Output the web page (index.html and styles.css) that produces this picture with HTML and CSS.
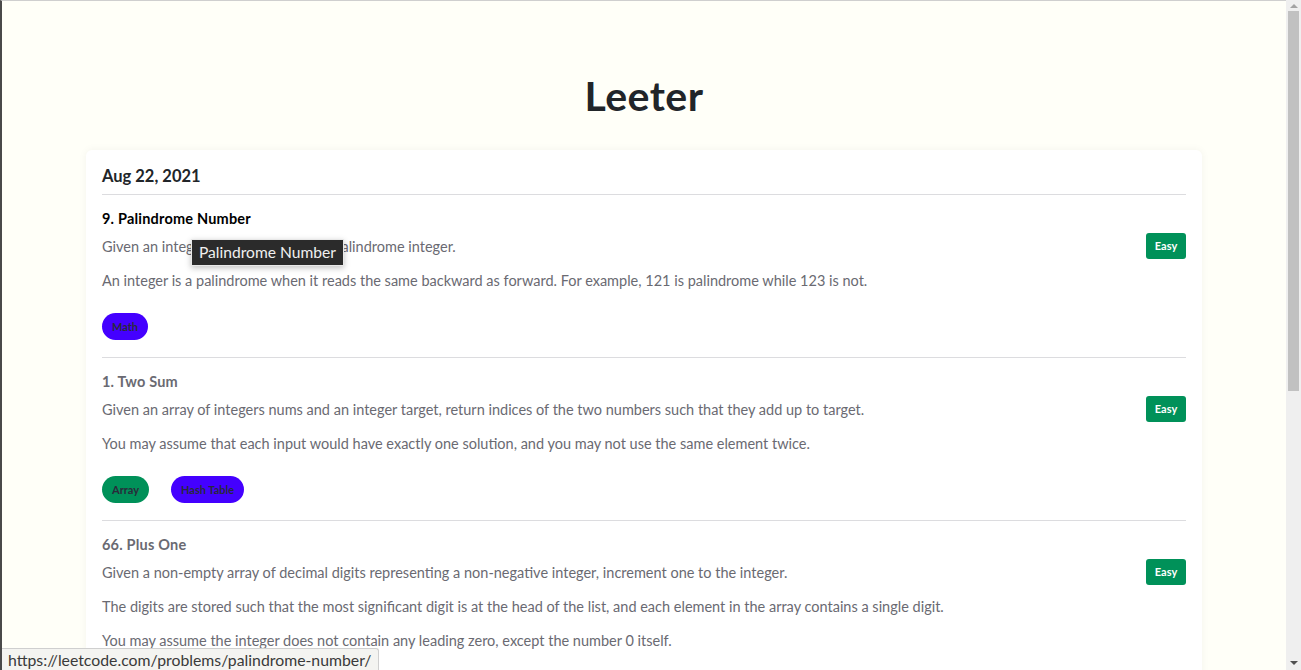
FILE: index.html
```html
<!DOCTYPE html>
<html lang="en">
<head>
<meta charset="utf-8">
<title>Leeter</title>
<link rel="stylesheet" href="styles.css">
</head>
<body>
<div class="window">
  <main class="page">
    <h1 class="brand">Leeter</h1>
    <div class="container">
      <section class="card">
        <h2 class="date">Aug 22, 2021</h2>
        <article class="item">
          <a class="item-title active" href="#">9. Palindrome Number</a>
          <div class="item-body">
            <div class="desc">
              <p>Given an integer x, return true if x is palindrome integer.</p>
              <p>An integer is a palindrome when it reads the same backward as forward. For example, 121 is palindrome while 123 is not.</p>
            </div>
            <span class="level">Easy</span>
          </div>
          <div class="tags">
            <span class="tag tag-blue">Math</span>
          </div>
        </article>
        <article class="item">
          <a class="item-title" href="#">1. Two Sum</a>
          <div class="item-body">
            <div class="desc">
              <p>Given an array of integers nums and an integer target, return indices of the two numbers such that they add up to target.</p>
              <p>You may assume that each input would have exactly one solution, and you may not use the same element twice.</p>
            </div>
            <span class="level">Easy</span>
          </div>
          <div class="tags">
            <span class="tag tag-green">Array</span>
            <span class="tag tag-blue">Hash Table</span>
          </div>
        </article>
        <article class="item">
          <a class="item-title" href="#">66. Plus One</a>
          <div class="item-body">
            <div class="desc">
              <p>Given a non-empty array of decimal digits representing a non-negative integer, increment one to the integer.</p>
              <p>The digits are stored such that the most significant digit is at the head of the list, and each element in the array contains a single digit.</p>
              <p>You may assume the integer does not contain any leading zero, except the number 0 itself.</p>
            </div>
            <span class="level">Easy</span>
          </div>
        </article>
      </section>
    </div>
    <div class="tooltip">Palindrome Number</div>
    <div class="statusbar">https://leetcode.com/problems/palindrome-number/</div>
  </main>
  <div class="scrollbar">
    <span class="arrow arrow-up"></span>
    <div class="track"><div class="thumb"></div></div>
    <span class="arrow arrow-down"></span>
  </div>
</div>
</body>
</html>
```
FILE: styles.css
```css
html, body {
  margin: 0;
  padding: 0;
  height: 100%;
  overflow: hidden;
}
body {
  font-family: Lato, "Noto Sans", sans-serif;
  background: #fffff8;
}
.window {
  display: flex;
  height: 670px;
}
.page {
  position: relative;
  flex: 1;
  min-width: 0;
  height: 670px;
  overflow: hidden;
  border-left: 2px solid #4a4a4a;
  border-top: 1px solid #cfcfcf;
  box-sizing: border-box;
  background: #fffff8;
}
.brand {
  margin: 0;
  padding-top: 70px;
  height: 79px;
  text-align: center;
  font-size: 41px;
  line-height: 50px;
  font-weight: 700;
  color: #212529;
  letter-spacing: 0.5px;
}
.container {
  max-width: 1140px;
  margin: 0 auto;
  padding: 0 12px;
  box-sizing: border-box;
}
.card {
  background: #fff;
  border-radius: 6px;
  box-shadow: 0 0 8px rgba(0, 0, 0, 0.05);
  padding: 16px 16px 0;
}
.date {
  margin: 0 0 8px;
  font-size: 16.5px;
  line-height: 20px;
  font-weight: 700;
  color: #212529;
}
.item {
  border-top: 1px solid #dcdcdf;
  padding: 14px 0 17px;
}
.item-title {
  display: block;
  font-size: 14.5px;
  line-height: 20px;
  font-weight: 700;
  color: #6a6a72;
  text-decoration: none;
  letter-spacing: 0.2px;
}
.item-title.active {
  color: #000;
}
.item-body {
  display: flex;
  align-items: flex-start;
  gap: 16px;
  margin-top: 8px;
}
.desc {
  flex: 1;
}
.desc p {
  margin: 0 0 14px;
  font-size: 14.5px;
  line-height: 20px;
  color: #6a6a72;
}
.level {
  flex: none;
  margin-top: -4px;
  width: 40px;
  height: 26px;
  border-radius: 3px;
  background: #009159;
  color: #fff;
  font-size: 11px;
  font-weight: 700;
  line-height: 26px;
  text-align: center;
}
.tags {
  display: flex;
  gap: 22px;
  margin-top: 8px;
}
.tag {
  height: 27px;
  padding: 0 10px;
  border-radius: 14px;
  font-size: 11px;
  font-weight: 700;
  line-height: 27px;
  color: #2a2a3a;
}
.tag-blue {
  background: #4400ff;
}
.tag-green {
  background: #009159;
}
.tooltip {
  position: absolute;
  left: 189px;
  top: 238px;
  height: 25px;
  padding: 0 7px;
  background: #2b2b2b;
  border: 1px solid #e8e8e8;
  color: #f0f0f0;
  font-size: 15.6px;
  line-height: 25px;
  box-shadow: 0 2px 6px rgba(0, 0, 0, 0.25);
}
.statusbar {
  position: absolute;
  left: 0;
  bottom: 0;
  width: 370px;
  height: 21px;
  padding-left: 6px;
  background: #f4f4f1;
  border-top: 1px solid #cfcfcf;
  border-right: 1px solid #cfcfcf;
  border-top-right-radius: 3px;
  color: #3a3a3a;
  font-size: 15.8px;
  line-height: 21px;
}
.scrollbar {
  flex: none;
  width: 15px;
  background: #efefef;
  display: flex;
  flex-direction: column;
  align-items: center;
}
.arrow {
  width: 0;
  height: 0;
  border-left: 4px solid transparent;
  border-right: 4px solid transparent;
}
.arrow-up {
  margin: 4px 0 3px;
  border-bottom: 4px solid #a3a3a3;
}
.arrow-down {
  margin: 3px 0 5px;
  border-top: 4px solid #505050;
}
.track {
  flex: 1;
  width: 100%;
  padding: 0 2px;
  box-sizing: border-box;
}
.thumb {
  height: 380px;
  background: #c1c1c1;
}
```
